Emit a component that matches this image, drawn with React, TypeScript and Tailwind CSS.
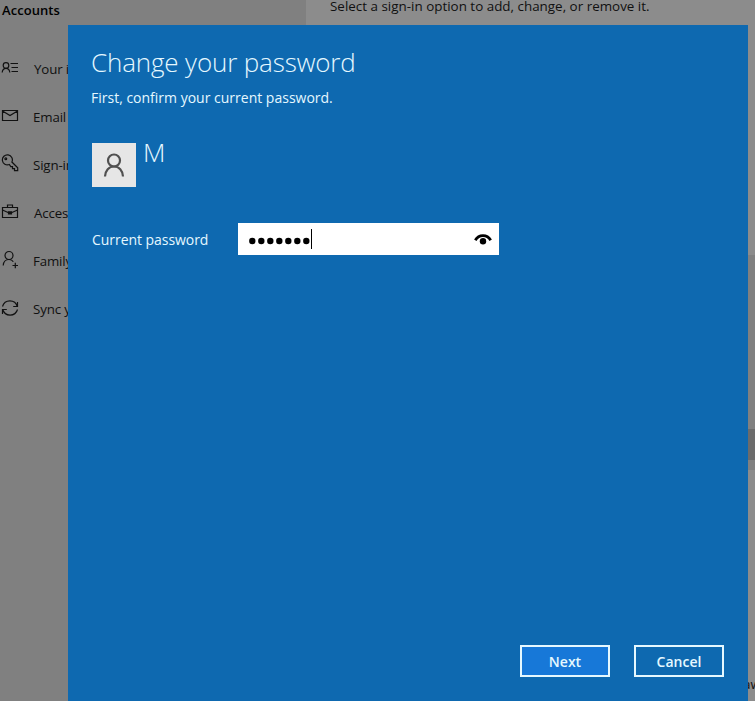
import type { ReactNode } from "react";

function Icon({ children }: { children: ReactNode }) {
  return (
    <svg
      viewBox="0 0 20 20"
      className="h-5 w-5 shrink-0"
      fill="none"
      stroke="#111"
      strokeWidth="1.2"
    >
      {children}
    </svg>
  );
}

const items = [
  {
    label: "Your info",
    shift: "pl-[14px]",
    icon: (
      <>
        <circle cx="6" cy="7.5" r="2.8" />
        <path d="M2.2 14.500c.2-2.800 1.800-4.200 3.800-4.200s3.600 1.400 3.800 4.200M10.500 5.500h7.500M11.500 9.500h6.500M11.500 13.500h6.500" />
      </>
    ),
  },
  {
    label: "Email & accounts",
    shift: "pl-[13px]",
    icon: <path d="M2.500 4.500h15v10h-15zM2.500 5l7.500 4.500L17.500 5" />,
  },
  {
    label: "Sign-in options",
    shift: "pl-[13px]",
    icon: (
      <>
        <path d="M9.300 10.500A5 5 0 1 1 11.900 8l5.800 5.800v2.900h-3.200v-2h-2v-2h-1.700z" />
        <circle cx="5.800" cy="4.800" r=".9" />
      </>
    ),
  },
  {
    label: "Access work or school",
    shift: "pl-[14px]",
    icon: (
      <path d="M2.500 5.500h15v10h-15zM7.500 5.500v-2.500h5v2.500M2.500 8l6 2.700h3l6-2.700M8.500 9.800h3v2h-3z" />
    ),
  },
  {
    label: "Family & other users",
    shift: "pl-[13px]",
    icon: (
      <>
        <circle cx="9" cy="5.500" r="4" />
        <path d="M3.200 15.500c.3-3.800 2.800-6 5.800-6 1.900 0 3.500.8 4.300 2.300M12.500 15.500h5.500M15.300 12.800v5.400" />
      </>
    ),
  },
  {
    label: "Sync your settings",
    shift: "pl-[13px]",
    icon: (
      <path d="M2.500 8.500A7.700 7.700 0 0 1 17.300 8.500M17.500 4V8.500h-4.300M17.500 11.500A7.700 7.700 0 0 1 2.700 11.500M2.500 16V11.500h4.300" />
    ),
  },
];

export default function App() {
  return (
    <div className="relative flex h-[701px] w-[755px] overflow-hidden bg-[#8c8c8c] font-['Open_Sans','Noto_Sans',sans-serif] text-[#101010]">
      <aside className="w-[306px] shrink-0 bg-[#808080]">
        <h2 className="h-[45px] pl-[2px] text-[13px] leading-[21px] font-semibold tracking-[0.05px] text-black">
          Accounts
        </h2>
        <nav>
          {items.map(({ label, shift, icon }) => (
            <div key={label} className="flex h-12 items-center whitespace-nowrap">
              <div className="-mt-0.5">
                <Icon>{icon}</Icon>
              </div>
              <span className={`${shift} text-[13.3px] leading-5 tracking-[-0.15px]`}>
                {label}
              </span>
            </div>
          ))}
        </nav>
      </aside>

      <main className="flex min-w-0 flex-1 justify-between">
        <p className="pl-6 text-[13.4px] leading-[13px] tracking-[0.010px] whitespace-nowrap">
          Select a sign-in option to add, change, or remove it.
        </p>
        <div className="flex w-[7px] shrink-0 flex-col">
          <div className="h-[255px]" />
          <div className="h-[174px] bg-[#808080]" />
          <div className="h-[31px] bg-[#6b6b6b]" />
          <div className="h-[10px] bg-[#808080]" />
          <div className="flex h-[231px] items-end overflow-hidden pb-[8px] text-[13.4px] leading-[18px]">
            <span className="-ml-[5px]">aw</span>
          </div>
        </div>
      </main>

      <section className="absolute top-[25px] left-[68px] flex h-[676px] w-[680px] flex-col bg-[#0e69b0] pr-6 pb-6 pl-6 text-[#e5f8ff]">
        <h1 className="-ml-px h-[58px] pt-[19px] text-[26px] leading-[36px] font-light tracking-[-0.15px]">
          Change your password
        </h1>
        <p className="-ml-px h-[60px] pt-[5px] text-[14px] leading-[20px]">
          First, confirm your current password.
        </p>
        <div className="flex h-[80px] gap-[7px]">
          <div className="flex h-11 w-11 items-center justify-center bg-[#e6e6e6]">
            <svg
              viewBox="0 0 22 24"
              className="h-6 w-[22px]"
              fill="none"
              stroke="#505050"
              strokeWidth="2.200"
            >
              <circle cx="11" cy="7.500" r="6" />
              <path d="M2 23.500c.3-6 4-10 9-10s8.700 4 9 10" />
            </svg>
          </div>
          <span className="-mt-[9px] text-[26px] leading-[36px] font-light">M</span>
        </div>
        <div className="flex h-8 items-center">
          <span className="w-[146px] pt-[2px] text-[14px] leading-5 tracking-[-0.05px]">
            Current password
          </span>
          <div className="flex h-8 w-[261px] items-center justify-between bg-white pr-[7px] pl-[11px]">
            <div className="flex items-center">
              <svg viewBox="0 0 62 8" className="mt-[4px] h-2 w-[62px]" fill="#000">
                {[3.3, 12.300, 21.300, 30.300, 39.300, 48.300, 57.300].map((x) => (
                  <circle key={x} cx={x} cy="4" r="3.200" />
                ))}
              </svg>
              <div className="h-5 w-px bg-black" />
            </div>
            <svg viewBox="0 0 18 12" className="h-3 w-[18px]" fill="none">
              <path d="M1.300 7.200C4.800 1.200 13.200 1.200 16.700 7.200" stroke="#000" strokeWidth="2.800" />
              <circle cx="9" cy="8.300" r="3.200" fill="#000" />
            </svg>
          </div>
        </div>
        <div className="mt-auto flex justify-end gap-6 text-[14px] font-semibold">
          <button className="h-8 w-[90px] border-2 border-[#e5f8ff] bg-[#1778d8]">Next</button>
          <button className="h-8 w-[90px] border-2 border-[#e5f8ff]">Cancel</button>
        </div>
      </section>
    </div>
  );
}
